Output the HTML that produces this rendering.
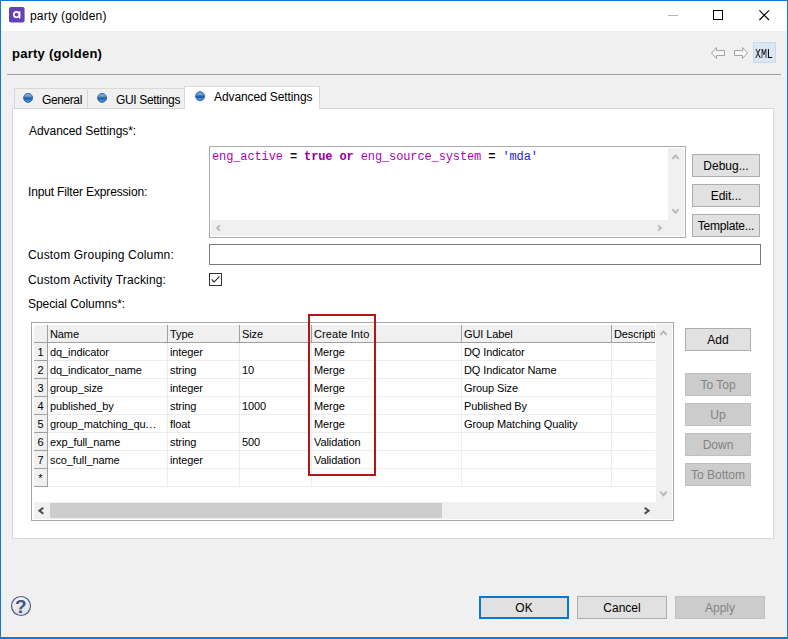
<!DOCTYPE html>
<html lang="en">
<head>
<meta charset="utf-8">
<title>party (golden)</title>
<style>
*{box-sizing:border-box;margin:0;padding:0}
html,body{width:788px;height:639px;overflow:hidden;background:#f0f0f0}
body{position:relative;font-family:"Liberation Sans",sans-serif;font-size:12px;color:#000}
.abs{position:absolute}
.t{position:absolute;white-space:nowrap;line-height:1}
#win{position:absolute;left:0;top:0;width:788px;height:639px;border:1px solid #0b7ad9;border-bottom-width:2px;pointer-events:none;z-index:50}
#titlebar{position:absolute;left:1px;top:1px;width:786px;height:30px;background:#fff}
.btn{position:absolute;height:23px;background:#e1e1e1;border:1px solid #adadad;text-align:center;line-height:22px;font-size:12px;color:#000;white-space:nowrap}
.btn.dis{background:#cccccc;border-color:#bfbfbf;color:#838383}
.lbl{position:absolute;left:29px;white-space:nowrap;line-height:14px;height:14px;font-size:12px}
/* table */
.hc{position:absolute;top:325px;height:18px;background:#f0f0f0;border-right:1px solid #a0a0a0;border-bottom:1px solid #a0a0a0;font-size:11px;line-height:17px;padding-left:2px;padding-top:1px;white-space:nowrap;overflow:hidden;letter-spacing:-0.1px}
.rh{position:absolute;left:34px;width:14px;height:18px;background:#f0f0f0;border-right:1px solid #a0a0a0;border-bottom:1px solid #a0a0a0;font-size:11px;line-height:17px;padding-top:1px;text-align:center}
.c{position:absolute;font-size:11px;line-height:13px;height:13px;white-space:nowrap;letter-spacing:-0.1px}
.vl{position:absolute;top:343px;width:1px;height:144px;background:#ececec}
.hl{position:absolute;left:48px;width:607px;height:1px;background:#ececec}
</style>
</head>
<body>
<div id="titlebar"></div>
<div id="win"></div>

<!-- app icon -->
<svg class="abs" style="left:9px;top:7px" width="16" height="16" viewBox="0 0 16 16">
  <rect x="0" y="0" width="15.6" height="15.6" rx="2" fill="#6540b7"/>
  <circle cx="7.5" cy="7.6" r="2.75" fill="none" stroke="#fff" stroke-width="1.6"/>
  <rect x="10" y="4.3" width="1.4" height="7.2" fill="#fff"/>
</svg>
<div class="t" style="left:30px;top:9px;font-size:12px;line-height:14px;letter-spacing:0.18px">party (golden)</div>

<!-- caption buttons -->
<div class="abs" style="left:668px;top:15px;width:10px;height:1px;background:#b5b5b5"></div>
<div class="abs" style="left:713px;top:10px;width:10px;height:10px;border:1px solid #000"></div>
<svg class="abs" style="left:759px;top:10px" width="11" height="11" viewBox="0 0 11 11"><path d="M0.4 0.4 L10 10 M10 0.4 L0.4 10" stroke="#000" stroke-width="1.1" fill="none"/></svg>

<!-- header -->
<div class="t" style="left:12px;top:46px;font-size:13px;font-weight:bold;line-height:15px;letter-spacing:0.25px">party (golden)</div>
<svg class="abs" style="left:710px;top:46px" width="16" height="14" viewBox="0 0 16 14"><path d="M1.5 7 L6.5 1.5 L6.5 4.5 L14.5 4.5 L14.5 9.5 L6.5 9.5 L6.5 12.5 Z" fill="#f8f8f8" stroke="#a3a3a3" stroke-width="1" stroke-linejoin="round"/></svg>
<svg class="abs" style="left:733px;top:46px" width="16" height="14" viewBox="0 0 16 14"><path d="M14.5 7 L9.5 1.5 L9.5 4.5 L1.5 4.5 L1.5 9.5 L9.5 9.5 L9.5 12.5 Z" fill="#f8f8f8" stroke="#a3a3a3" stroke-width="1" stroke-linejoin="round"/></svg>
<div class="abs" style="left:753px;top:42px;width:23px;height:21px;background:#dbe7f3;border:1px solid #c2dbf2"></div>
<div class="t" style="left:755px;top:48px;font-family:'Liberation Mono',monospace;font-size:12px;line-height:14px;transform:scaleX(0.82);transform-origin:0 0;will-change:transform;color:#000">XML</div>

<div class="abs" style="left:7px;top:74px;width:774px;height:1px;background:#a0a0a0"></div>

<!-- tab panel -->
<div class="abs" id="panel" style="left:12px;top:108px;width:762px;height:431px;background:#fff;border:1px solid #d9d9d9"></div>
<!-- inactive tabs -->
<div class="abs" style="left:14px;top:88px;width:74px;height:21px;background:#f0f0f0;border:1px solid #d9d9d9;border-bottom:none"></div>
<div class="abs" style="left:87px;top:88px;width:98px;height:21px;background:#f0f0f0;border:1px solid #d9d9d9;border-bottom:none"></div>
<div class="abs" style="left:12px;top:108px;width:174px;height:1px;background:#d9d9d9"></div>
<!-- active tab -->
<div class="abs" style="left:184px;top:86px;width:136px;height:23px;background:#fff;border:1px solid #d9d9d9;border-bottom:none"></div>

<svg width="0" height="0" style="position:absolute"><defs>
<linearGradient id="dot" x1="0" y1="0" x2="0" y2="1"><stop offset="0" stop-color="#2b69ae"/><stop offset="0.16" stop-color="#8db2da"/><stop offset="0.36" stop-color="#5a8ec7"/><stop offset="0.52" stop-color="#1d5fa9"/><stop offset="0.66" stop-color="#2a69b1"/><stop offset="0.86" stop-color="#6496cd"/><stop offset="1" stop-color="#2565ac"/></linearGradient>
</defs></svg>
<svg class="abs" style="left:23px;top:93px" width="11" height="11"><circle cx="5.1" cy="4.9" r="4.5" fill="url(#dot)" stroke="#2767ad" stroke-width="0.9"/></svg>
<svg class="abs" style="left:97px;top:93px" width="11" height="11"><circle cx="5.1" cy="4.9" r="4.5" fill="url(#dot)" stroke="#2767ad" stroke-width="0.9"/></svg>
<svg class="abs" style="left:195px;top:91px" width="11" height="11"><circle cx="5.1" cy="5.2" r="4.5" fill="url(#dot)" stroke="#2767ad" stroke-width="0.9"/></svg>
<div class="t" style="left:42px;top:93px;line-height:14px;letter-spacing:-0.4px">General</div>
<div class="t" style="left:116px;top:93px;line-height:14px;letter-spacing:-0.33px">GUI Settings</div>
<div class="t" style="left:214px;top:90px;line-height:14px;letter-spacing:-0.1px">Advanced Settings</div>

<!-- labels -->
<div class="lbl" style="top:124px;letter-spacing:-0.05px">Advanced Settings*:</div>
<div class="lbl" style="top:185px;left:28px;letter-spacing:-0.15px">Input Filter Expression:</div>
<div class="lbl" style="top:248px;left:28px;letter-spacing:0.17px">Custom Grouping Column:</div>
<div class="lbl" style="top:273px;left:28px;letter-spacing:0.16px">Custom Activity Tracking:</div>
<div class="lbl" style="top:297px;left:28px;letter-spacing:-0.06px">Special Columns*:</div>

<!-- expression editor -->
<div class="abs" style="left:209px;top:146px;width:477px;height:92px;background:#fff;border:1px solid #a9acb5"></div>
<div class="abs" style="left:668px;top:148px;width:16px;height:88px;background:#f0f0f0"></div>
<div class="abs" style="left:211px;top:220px;width:473px;height:16px;background:#f0f0f0"></div>
<div class="t" style="left:212px;top:150px;font-family:'Liberation Mono',monospace;font-size:12px;line-height:14px;letter-spacing:-0.12px;color:#b000b0">eng_active <b style="color:#0a0a14">=</b> <b style="color:#96009a">true</b> <b style="color:#96009a">or</b> eng_source_system <b style="color:#0a0a14">=</b> <span style="color:#2222e8">'mda'</span></div>
<svg class="abs" style="left:671px;top:153px" width="10" height="8" viewBox="0 0 10 8"><path d="M1.3 6 L4.5 2.4 L7.7 6" stroke="#b9b9b9" stroke-width="1.9" fill="none"/></svg>
<svg class="abs" style="left:671px;top:207px" width="10" height="8" viewBox="0 0 10 8"><path d="M1.3 2.2 L4.5 5.8 L7.7 2.2" stroke="#b9b9b9" stroke-width="1.9" fill="none"/></svg>
<svg class="abs" style="left:215px;top:223px" width="8" height="10" viewBox="0 0 8 10"><path d="M5 2.4 L2 5 L5 7.6" stroke="#b9b9b9" stroke-width="1.9" fill="none"/></svg>
<svg class="abs" style="left:656px;top:223px" width="8" height="10" viewBox="0 0 8 10"><path d="M2 2.4 L5 5 L2 7.6" stroke="#b9b9b9" stroke-width="1.9" fill="none"/></svg>

<div class="btn" style="left:692px;top:154px;width:68px">Debug...</div>
<div class="btn" style="left:692px;top:184px;width:68px">Edit...</div>
<div class="btn" style="left:692px;top:214px;width:68px;letter-spacing:-0.2px">Template...</div>

<!-- text input & checkbox -->
<div class="abs" style="left:209px;top:244px;width:552px;height:21px;background:#fff;border:1px solid #7a7a7a"></div>
<div class="abs" style="left:209px;top:273px;width:13px;height:13px;background:#fff;border:1px solid #333"></div>
<svg class="abs" style="left:209px;top:273px" width="13" height="13" viewBox="0 0 13 13"><path d="M2.6 6.4 L5.2 9 L10.4 3.4" stroke="#222" stroke-width="1.1" fill="none"/></svg>

<!-- table -->
<div class="abs" style="left:31px;top:322px;width:643px;height:199px;background:#fff;border:1px solid #a3a7b0"></div>
<!--TBL-->
<!-- header cells -->
<div class="hc" style="left:34px;width:14px"></div>
<div class="hc" style="left:48px;width:120px">Name</div>
<div class="hc" style="left:168px;width:72px">Type</div>
<div class="hc" style="left:240px;width:72px">Size</div>
<div class="hc" style="left:312px;width:150px;letter-spacing:0.09px">Create Into</div>
<div class="hc" style="left:462px;width:150px">GUI Label</div>
<div class="hc" style="left:612px;width:43px;border-right:none">Descripti</div>
<!-- grid lines -->
<div class="vl" style="left:167px"></div>
<div class="vl" style="left:239px"></div>
<div class="vl" style="left:311px"></div>
<div class="vl" style="left:461px"></div>
<div class="vl" style="left:611px"></div>
<div class="hl" style="top:360px"></div>
<div class="hl" style="top:378px"></div>
<div class="hl" style="top:396px"></div>
<div class="hl" style="top:414px"></div>
<div class="hl" style="top:432px"></div>
<div class="hl" style="top:450px"></div>
<div class="hl" style="top:468px"></div>
<div class="hl" style="top:486px"></div>
<!-- rows -->
<div class="rh" style="top:343px">1</div>
<div class="c" style="left:50px;top:346px">dq_indicator</div>
<div class="c" style="left:170px;top:346px">integer</div>
<div class="c" style="left:314px;top:346px">Merge</div>
<div class="c" style="left:464px;top:346px">DQ Indicator</div>
<div class="rh" style="top:361px">2</div>
<div class="c" style="left:50px;top:364px">dq_indicator_name</div>
<div class="c" style="left:170px;top:364px">string</div>
<div class="c" style="left:242px;top:364px">10</div>
<div class="c" style="left:314px;top:364px">Merge</div>
<div class="c" style="left:464px;top:364px">DQ Indicator Name</div>
<div class="rh" style="top:379px">3</div>
<div class="c" style="left:50px;top:382px">group_size</div>
<div class="c" style="left:170px;top:382px">integer</div>
<div class="c" style="left:314px;top:382px">Merge</div>
<div class="c" style="left:464px;top:382px">Group Size</div>
<div class="rh" style="top:397px">4</div>
<div class="c" style="left:50px;top:400px">published_by</div>
<div class="c" style="left:170px;top:400px">string</div>
<div class="c" style="left:242px;top:400px">1000</div>
<div class="c" style="left:314px;top:400px">Merge</div>
<div class="c" style="left:464px;top:400px">Published By</div>
<div class="rh" style="top:415px">5</div>
<div class="c" style="left:50px;top:418px">group_matching_qu<span style="letter-spacing:0.7px">...</span></div>
<div class="c" style="left:170px;top:418px">float</div>
<div class="c" style="left:314px;top:418px">Merge</div>
<div class="c" style="left:464px;top:418px">Group Matching Quality</div>
<div class="rh" style="top:433px">6</div>
<div class="c" style="left:50px;top:436px">exp_full_name</div>
<div class="c" style="left:170px;top:436px">string</div>
<div class="c" style="left:242px;top:436px">500</div>
<div class="c" style="left:314px;top:436px">Validation</div>
<div class="rh" style="top:451px">7</div>
<div class="c" style="left:50px;top:454px">sco_full_name</div>
<div class="c" style="left:170px;top:454px">integer</div>
<div class="c" style="left:314px;top:454px">Validation</div>
<div class="rh" style="top:469px">*</div>
<!-- scrollbars -->
<div class="abs" style="left:656px;top:324px;width:16px;height:195px;background:#f0f0f0"></div>
<div class="abs" style="left:34px;top:502px;width:638px;height:17px;background:#f0f0f0"></div>
<div class="abs" style="left:50px;top:503px;width:392px;height:15px;background:#cdcdcd"></div>
<svg class="abs" style="left:659px;top:329px" width="10" height="8" viewBox="0 0 10 8"><path d="M1.3 6 L4.5 2.4 L7.7 6" stroke="#b9b9b9" stroke-width="1.9" fill="none"/></svg>
<svg class="abs" style="left:659px;top:489px" width="10" height="8" viewBox="0 0 10 8"><path d="M1.3 2.6 L4.5 6.2 L7.7 2.6" stroke="#b9b9b9" stroke-width="1.9" fill="none"/></svg>
<svg class="abs" style="left:37px;top:505px" width="8" height="10" viewBox="0 0 8 10"><path d="M6.3 2.8 L2.4 5.7 L6.3 8.6" stroke="#4d4d4d" stroke-width="2" fill="none"/></svg>
<svg class="abs" style="left:643px;top:505px" width="8" height="10" viewBox="0 0 8 10"><path d="M1.7 2.8 L5.6 5.7 L1.7 8.6" stroke="#4d4d4d" stroke-width="2" fill="none"/></svg>
<!-- red highlight -->
<div class="abs" style="left:308px;top:314px;width:68px;height:162px;border:2px solid #b01818"></div>
<!--/TBL-->

<!-- right buttons -->
<div class="btn" style="left:685px;top:328px;width:66px">Add</div>
<div class="btn dis" style="left:685px;top:373px;width:66px">To Top</div>
<div class="btn dis" style="left:685px;top:403px;width:66px">Up</div>
<div class="btn dis" style="left:685px;top:433px;width:66px">Down</div>
<div class="btn dis" style="left:685px;top:463px;width:66px">To Bottom</div>

<!-- bottom -->
<svg class="abs" style="left:10px;top:595px" width="22" height="22" viewBox="0 0 22 22"><defs><linearGradient id="hg" x1="0" y1="0" x2="0" y2="1"><stop offset="0" stop-color="#f6f6f6"/><stop offset="1" stop-color="#dedede"/></linearGradient></defs><circle cx="11" cy="11" r="9.5" fill="url(#hg)" stroke="#4a5f88" stroke-width="1.2"/></svg>
<div class="t" style="left:15px;top:596px;font-size:19px;font-weight:bold;line-height:21px;color:#3d5580">?</div>
<div class="btn" style="left:479px;top:596px;width:90px;border:2px solid #0078d7;line-height:20px">OK</div>
<div class="btn" style="left:577px;top:596px;width:90px">Cancel</div>
<div class="btn dis" style="left:675px;top:596px;width:90px">Apply</div>
</body>
</html>
